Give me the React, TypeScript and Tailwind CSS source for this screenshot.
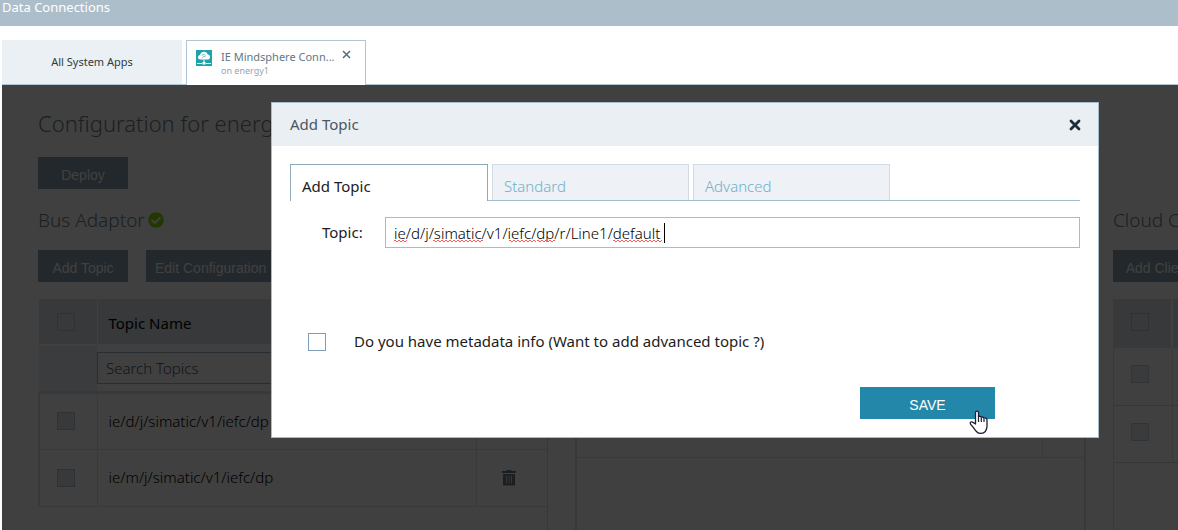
import type { ReactNode } from "react";
import { FaCheckCircle } from "react-icons/fa";

function CheckBox({ label, light = false }: { label: string; light?: boolean }) {
  return (
    <input
      type="checkbox"
      aria-label={label}
      className={
        light
          ? "block size-[18px] appearance-none border border-[#c8ced4] bg-[#e6eaee]"
          : "block size-[18px] appearance-none border border-[#bcc6ce] bg-[#dce2ea]"
      }
    />
  );
}

function PageButton({ children }: { children: ReactNode }) {
  return (
    <button
      type="button"
      className="block h-8 min-w-[90px] shrink-0 bg-[#88a0ae] px-[9px] pt-1 font-['Liberation_Sans',sans-serif] text-sm whitespace-nowrap text-white"
    >
      {children}
    </button>
  );
}

function TrashIcon() {
  return (
    <svg viewBox="0 0 14 16" className="h-4 w-3.5" aria-hidden="true">
      <path d="M4.500 0h5v1H14v2H0V1h4.500z" fill="#6c7c88" />
      <path d="M1 4h12v11.500H1z" fill="#6c7c88" />
      <path d="M4.500 5.500v8M7 5.500v8M9.500 5.500v8" stroke="#cfd8de" strokeWidth="1" />
    </svg>
  );
}

function CloudIcon() {
  return (
    <svg viewBox="0 0 16 16" className="size-4 shrink-0" aria-hidden="true">
      <rect width="16" height="16" fill="#1fa3ab" />
      <path
        d="M4.600 9.600C2.900 9.600 2 8.600 2 7.300c0-1.200.8-2 2-2.200C4.400 3 5.900 1.700 8 1.700c1.900 0 3.400 1.200 3.800 2.800 1.400.1 2.300 1.100 2.300 2.500s-1 2.600-2.500 2.600z"
        fill="#fff"
      />
      <path
        d="M5.500 5.500C6.500 4.500 7.500 4.500 8.500 4.500M6 7.800C7 6.500 8.500 6 10 6"
        stroke="#1fa3ab"
        strokeWidth=".7"
        fill="none"
      />
      <path d="M8 9.500v3M1 13.500h5M10 13.500h5" stroke="#fff" strokeWidth="1" />
      <rect x="6.500" y="12" width="3" height="2.500" fill="#fff" />
    </svg>
  );
}

function HandCursor() {
  return (
    <svg
      viewBox="0 0 20 25"
      className="pointer-events-none absolute top-[23px] right-[6px] z-10 h-[25px] w-5"
      aria-hidden="true"
    >
      <path
        d="M6.500 2.500C6.500 .600 9.500 .600 9.500 2.500V6.500c1-.5 2.500-.2 2.700.700 1-.5 2.400-.1 2.600.800 1.100-.5 3.200 0 3.200 1.800V16.500c0 2.500-1.200 3.800-1.800 5.200-1.700 2.300-6.500 2.300-8.500 0C5.500 19.700 4.500 17.200 2.200 15 0 12.600 2 11.400 3.500 12.100L6.500 14z"
        fill="#fff"
        stroke="#1d1d35"
        strokeWidth="1.300"
        strokeLinejoin="round"
      />
      <path d="M9.500 6.500V12M12.300 7.500V12M15 8.500V12" stroke="#1d1d35" strokeWidth="1.200" />
    </svg>
  );
}

const topics = ["ie/d/j/simatic/v1/iefc/dp", "ie/m/j/simatic/v1/iefc/dp"];

function BusAdaptor() {
  return (
    <section className="w-[510px] shrink-0">
      <h2 className="flex h-7 items-center gap-[3px] text-[19px] font-light text-[#6c7f8c]">
        Bus Adaptor
        <FaCheckCircle className="size-4 text-[#8fdc00]" />
      </h2>
      <div className="mt-4 flex gap-[18px]">
        <PageButton>Add Topic</PageButton>
        <PageButton>Edit Configuration</PageButton>
      </div>
      <div className="mt-[17px] min-h-[300px] border-r border-[#d5dbe0]">
        <table className="w-full table-fixed border-collapse text-left text-[15px]">
          <colgroup>
            <col className="w-[58px]" />
            <col />
            <col className="w-[71px]" />
          </colgroup>
          <thead>
            <tr className="h-[46px] border-b-2 border-white bg-[#dce2e8]">
              <th className="border-r border-white pl-[18px]">
                <CheckBox label="Select all topics" />
              </th>
              <th className="pt-1 pl-[11px] font-normal">Topic Name</th>
              <th />
            </tr>
            <tr className="h-[47px] border-b-3 border-[#dce2e8]">
              <td className="bg-[#ecf0f6]" />
              <td>
                <input
                  type="text"
                  aria-label="Search Topics"
                  placeholder="Search Topics"
                  className="block h-8 w-full border border-[#a0b4c4] bg-transparent px-2 font-light placeholder:text-[#555]"
                />
              </td>
              <td />
            </tr>
          </thead>
          <tbody>
            {topics.map((topic) => (
              <tr key={topic} className="h-[57px] border-b border-l-2 border-[#dce2e8]">
                <td className="border-r border-[#dce2e8] pl-[17px]">
                  <CheckBox label={topic} />
                </td>
                <td className="border-r border-[#dce2e8] pl-[11px] font-light">{topic}</td>
                <td>
                  <button type="button" aria-label="Delete" className="ml-[25px] block">
                    <TrashIcon />
                  </button>
                </td>
              </tr>
            ))}
          </tbody>
        </table>
      </div>
    </section>
  );
}

function MiddlePanel() {
  return (
    <section className="w-[511px] shrink-0 pt-[93px]">
      <div className="min-h-[300px] border-x-2 border-[#dce2e8]">
        <table className="w-full table-fixed border-collapse">
          <colgroup>
            <col />
            <col className="w-[42px]" />
          </colgroup>
          <tbody>
            <tr className="h-[158px] border-b border-[#dce2e8]">
              <td className="border-r border-[#dce2e8]" />
              <td />
            </tr>
          </tbody>
        </table>
      </div>
    </section>
  );
}

function CloudPanel() {
  return (
    <section className="w-[510px] shrink-0">
      <h2 className="flex h-7 items-center text-[19px] font-light text-[#6c7f8c]">Cloud Connector</h2>
      <div className="mt-4 flex">
        <PageButton>Add Client</PageButton>
      </div>
      <div className="mt-[17px] min-h-[300px] border-l border-[#dce2e8]">
        <table className="w-full table-fixed border-collapse">
          <colgroup>
            <col className="w-[58px]" />
            <col />
          </colgroup>
          <thead>
            <tr className="h-[49px] bg-[#dce2e8] align-top">
              <th className="border-r-2 border-white pt-[14px] pl-[17px]">
                <CheckBox label="Select all clients" />
              </th>
              <th />
            </tr>
          </thead>
          <tbody>
            {["Client 1", "Client 2"].map((name) => (
              <tr key={name} className="h-[57px] border-b border-[#d0d6da]">
                <td className="border-r border-[#dce2e8] pb-1 pl-[17px]">
                  <CheckBox label={name} light />
                </td>
                <td />
              </tr>
            ))}
          </tbody>
        </table>
      </div>
    </section>
  );
}

const otherTabs = ["Standard", "Advanced"];

function AddTopicDialog() {
  return (
    <div
      role="dialog"
      aria-labelledby="dialog-title"
      className="flex-1 border border-[#a5bccb] bg-white text-[15px] font-normal text-[#1c1c1c]"
    >
      <header className="flex h-[43px] items-center justify-between bg-[#eaeff3] pr-[17px] pl-[18px]">
        <h2 id="dialog-title" className="text-[#4a5761]">
          Add Topic
        </h2>
        <button type="button" aria-label="Close">
          <svg viewBox="0 0 12 12" className="size-3" aria-hidden="true">
            <path d="M2 2l8 8M10 2l-8 8" stroke="#1e2d36" strokeWidth="2.800" strokeLinecap="round" />
          </svg>
        </button>
      </header>
      <div className="px-[18px] pt-[18px]">
        <div role="tablist" className="flex h-[37px] gap-1 border-b border-[#a5bccb]">
          <button
            role="tab"
            type="button"
            aria-selected="true"
            className="-mb-px w-[198px] border border-b-0 border-[#8ea9b9] bg-white px-[11px] pt-1.5 text-left"
          >
            Add Topic
          </button>
          {otherTabs.map((tab) => (
            <button
              key={tab}
              role="tab"
              type="button"
              className="w-[197px] border border-b-0 border-[#d0dbe3] bg-[#eef1f6] px-[11px] pt-2 text-left font-light text-[#6fb0cb]"
            >
              {tab}
            </button>
          ))}
        </div>
        <div className="mt-4 flex items-center">
          <label htmlFor="topic" className="w-[95px] shrink-0 pl-8">
            Topic:
          </label>
          <div className="relative flex-1">
            <input
              id="topic"
              type="text"
              defaultValue="ie/d/j/simatic/v1/iefc/dp/r/Line1/default"
              className="block h-[31px] w-full border border-[#a5bccb] bg-white px-2 font-light text-black outline-none"
            />
            <svg
              viewBox="0 0 290 32"
              className="pointer-events-none absolute top-0 left-0 h-8 w-[290px]"
              aria-hidden="true"
            >
              <g stroke="#ff5a5a" strokeWidth="1" strokeDasharray="2 2" fill="none">
                <path d="M9 23.500h13M48 23.500h50M124 23.500h27M152 23.500h18M228 23.500h49" />
                <path d="M11 24.500h11M50 24.500h48M126 24.500h25M154 24.500h16M230 24.500h47" />
              </g>
              <path d="M279.500 6v20" stroke="#000" />
            </svg>
          </div>
        </div>
        <label className="mt-[82px] flex h-6 items-center gap-7 pl-[18px]">
          <input type="checkbox" className="size-[18px] appearance-none border border-[#7e9db8]" />
          <span className="pb-0.5">Do you have metadata info (Want to add advanced topic ?)</span>
        </label>
        <div className="mt-[33px] mb-[18px] flex justify-end pr-[85px]">
          <div className="relative">
            <button
              type="button"
              className="block h-8 w-[135px] bg-[#2387aa] pt-1 font-['Liberation_Sans',sans-serif] text-sm font-normal text-white"
            >
              SAVE
            </button>
            <HandCursor />
          </div>
        </div>
      </div>
    </div>
  );
}

export default function App() {
  return (
    <div className="flex h-screen flex-col overflow-hidden bg-white font-['Noto_Sans',sans-serif]">
      <header className="h-[26px] shrink-0 bg-[#adbecb] pl-0.5 text-[13px] leading-[14px] text-white">
        Data Connections
      </header>
      <nav className="mt-[14px] ml-0.5 flex h-[45px] shrink-0 gap-1 border-b border-[#b0c6d4]">
        <button type="button" className="w-[180px] bg-[#ebf0f5] text-[11px] text-[#2f3a42]">
          All System Apps
        </button>
        <div className="-mb-px flex w-[180px] items-start border border-b-0 border-[#b0c6d4] bg-white pt-[9px] pl-[9px]">
          <CloudIcon />
          <div className="ml-[9px] w-[115px] whitespace-nowrap">
            <div className="text-[11px] leading-[14px] text-[#5f7788]">IE Mindsphere Conn...</div>
            <div className="text-[9px] leading-[14px] text-[#8fa5b4]">on energy1</div>
          </div>
          <button type="button" aria-label="Close tab" className="ml-1.5">
            <svg viewBox="0 0 9 9" className="size-[9px]" aria-hidden="true">
              <path d="M1 1l7 7M8 1L1 8" stroke="#587080" strokeWidth="1.600" />
            </svg>
          </button>
        </div>
      </nav>
      <main className="relative ml-0.5 flex-1 overflow-hidden">
        <div className="pt-[21px] pl-9">
          <h1 className="h-[34px] text-[22px] leading-[34px] font-light text-[#6c7f8c]">
            Configuration for energy1
          </h1>
          <div className="mt-[17px] flex">
            <PageButton>Deploy</PageButton>
          </div>
          <div className="mt-[17px] flex gap-[27px]">
            <BusAdaptor />
            <MiddlePanel />
            <CloudPanel />
          </div>
        </div>
        <div className="absolute inset-0 flex items-start bg-black/75 pt-[17px] pr-[79px] pl-[269px]">
          <AddTopicDialog />
        </div>
      </main>
    </div>
  );
}
